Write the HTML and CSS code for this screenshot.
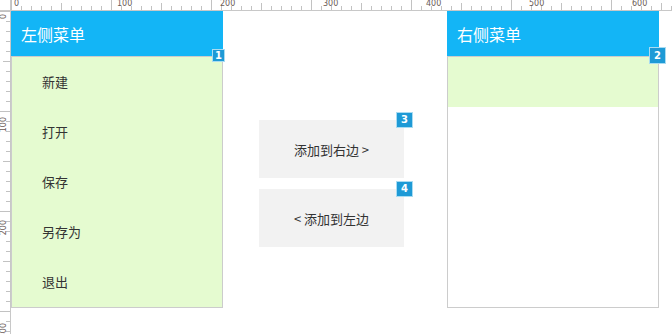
FILE: index.html
```html
<!DOCTYPE html>
<html lang="zh-CN">
<head>
    <meta charset="UTF-8">
    <meta name="viewport" content="width=device-width, initial-scale=1.0">
    <title>左右菜单</title>
    <link rel="stylesheet" href="styles.css">
</head>
<body>
    <div class="page">
        <div class="corner"></div>
        <div class="ruler ruler-top">
            <span>0</span><span>100</span><span>200</span><span>300</span><span>400</span><span>500</span><span>600</span>
        </div>
        <div class="ruler ruler-left">
            <span><i>0</i></span><span><i>100</i></span><span><i>200</i></span><span><i>300</i></span>
        </div>
        <div class="canvas">
            <div class="panel">
                <div class="panel-title">左侧菜单</div>
                <ul class="menu">
                    <li>新建</li>
                    <li>打开</li>
                    <li>保存</li>
                    <li>另存为</li>
                    <li>退出</li>
                </ul>
                <span class="badge badge-small">1</span>
            </div>
            <div class="actions">
                <button class="move-btn">添加到右边 &gt;<span class="badge">3</span></button>
                <button class="move-btn">&lt; 添加到左边<span class="badge">4</span></button>
            </div>
            <div class="panel panel-right">
                <div class="panel-title">右侧菜单</div>
                <ul class="menu">
                    <li></li>
                </ul>
                <span class="badge">2</span>
            </div>
        </div>
    </div>
</body>
</html>
```

FILE: styles.css
```css
body {
    margin: 0;
    background: #fff;
    font-family: "Noto Sans CJK SC", "Noto Sans", sans-serif;
    overflow: hidden;
}
.page {
    display: grid;
    grid-template-columns: 11px 1fr;
    grid-template-rows: 11px 1fr;
    width: 672px;
    height: 334px;
}
.corner {
    border-right: 1px solid #c8c8c8;
    border-bottom: 1px solid #c8c8c8;
    box-sizing: border-box;
}

/* rulers */
.ruler {
    box-sizing: border-box;
    font-family: "DejaVu Sans", sans-serif;
    font-size: 8px;
    color: #6a5a55;
    overflow: hidden;
}
.ruler-top {
    display: flex;
    border-bottom: 1px solid #c8c8c8;
    background:
        linear-gradient(to right, #c2c2c2 1px, transparent 1px) 0 100% / 100px 10px repeat-x,
        linear-gradient(to right, #c2c2c2 1px, transparent 1px) 0 100% / 50px 7px repeat-x,
        linear-gradient(to right, #c2c2c2 1px, transparent 1px) 0 100% / 10px 4px repeat-x;
}
.ruler-top span {
    flex: 0 0 100px;
    padding-left: 3px;
    line-height: 8px;
}
.ruler-left {
    display: flex;
    flex-direction: column;
    border-right: 1px solid #c8c8c8;
    background:
        linear-gradient(to bottom, #c2c2c2 1px, transparent 1px) 100% 0 / 10px 100px repeat-y,
        linear-gradient(to bottom, #c2c2c2 1px, transparent 1px) 100% 0 / 7px 50px repeat-y,
        linear-gradient(to bottom, #c2c2c2 1px, transparent 1px) 100% 0 / 4px 10px repeat-y;
}
.ruler-left span {
    flex: 0 0 100px;
    padding-top: 3px;
}
.ruler-left i {
    display: block;
    font-style: normal;
    writing-mode: vertical-rl;
    transform: rotate(180deg);
    line-height: 8px;
}

/* canvas */
.canvas {
    display: flex;
    align-items: flex-start;
}
.panel {
    position: relative;
    width: 212px;
    height: 297px;
    box-sizing: border-box;
    border: 1px solid #cccccc;
    border-top: none;
}
.panel-title {
    height: 45px;
    line-height: 46px;
    margin: 0 -1px;
    padding-left: 10px;
    background: #13b5f6;
    border-bottom: 1px solid #cccccc;
    color: #fff;
    font-size: 16px;
}
.menu {
    list-style: none;
    margin: 0;
    padding: 0;
    background: #e5fbd0;
}
.menu li {
    height: 50px;
    line-height: 50px;
    padding-left: 30px;
    font-size: 13px;
    color: #333;
}
.actions {
    display: flex;
    flex-direction: column;
    gap: 11px;
    margin: 109px 0 0 36px;
}
.move-btn {
    position: relative;
    width: 145px;
    height: 58px;
    border: none;
    padding: 0;
    background: #f2f2f2;
    font-family: inherit;
    font-size: 13px;
    color: #333;
}
.panel-right {
    margin-left: 43px;
}

/* note markers */
.badge {
    position: absolute;
    top: -8px;
    right: -9px;
    width: 17px;
    height: 16px;
    box-sizing: border-box;
    border: 1px solid #a9dcf2;
    background: #1e9ad6;
    color: #fff;
    font-family: "DejaVu Sans", sans-serif;
    font-weight: bold;
    font-size: 10px;
    line-height: 14px;
    text-align: center;
}
.panel .badge {
    top: 36px;
    right: -8px;
    height: 17px;
    line-height: 15px;
}
.panel .badge-small {
    top: 38px;
    right: -3px;
    width: 13px;
    height: 13px;
    line-height: 11px;
}
```
